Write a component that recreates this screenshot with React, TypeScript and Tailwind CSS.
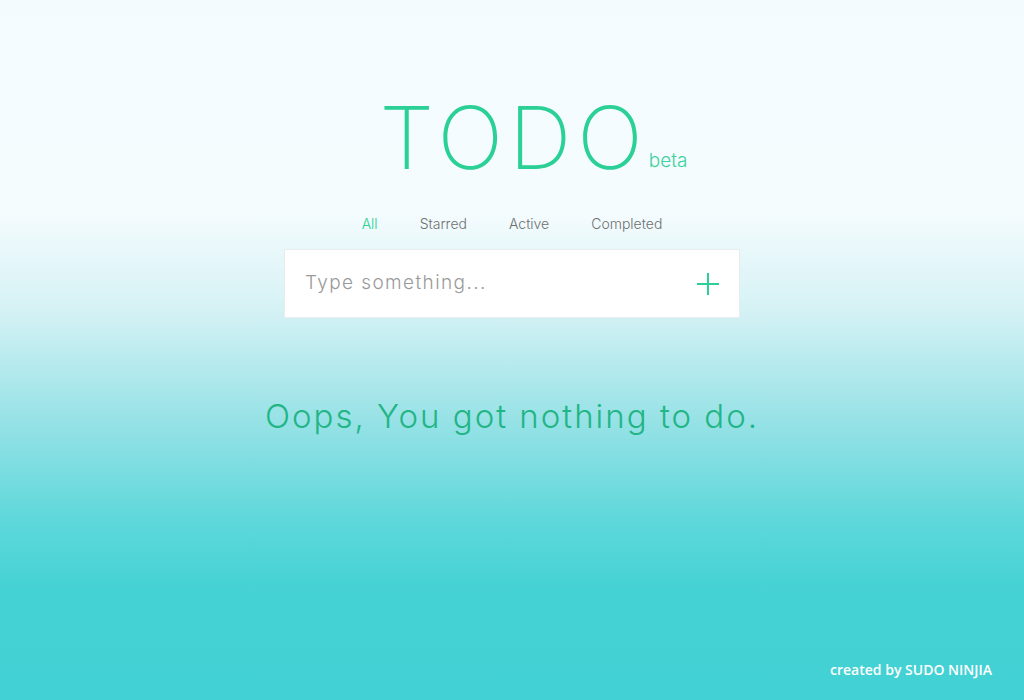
import React from "react";

export default function App() {
  const tabs = ["All", "Starred", "Active", "Completed"];
  return (
    <div className="relative w-full h-[700px] overflow-hidden flex flex-col items-center bg-[linear-gradient(180deg,#f4fbff_0%,#f5fcfe_30%,#d6f2f5_44%,#97e2e6_60%,#5fd8db_74%,#45d2d4_84%,#42d1d4_100%)] font-['Inter',sans-serif]">
      <div className="mt-[94px] ml-[43px] flex items-baseline">
        <h1 className="text-[87px] leading-none font-extralight tracking-[6px] text-[#2bd096]">TODO</h1>
        <span className="-translate-y-[2px] text-[19px] leading-none text-[#3dd19e] font-light">beta</span>
      </div>
      <nav className="mt-[36px] flex text-[14px] leading-none font-light">
        {tabs.map((t, i) => (
          <span key={t} className={`px-[21px] ${i === 0 ? "text-[#2bd096]" : "text-[#6f6f6f]"}`}>
            {t}
          </span>
        ))}
      </nav>
      <div className="mt-[18px] w-[456px] h-[69px] bg-white border border-[#e9ecec] flex items-center pl-[20px] pr-[19px]">
        <span className="flex-1 text-[19px] font-light tracking-[1.4px] text-[#9a9a9a]">Type something...</span>
        <svg width="24" height="24" viewBox="0 0 24 24">
          <path d="M12 1v22M1 12h22" stroke="#2bd096" strokeWidth="2" fill="none" />
        </svg>
      </div>
      <p className="mt-[82px] text-[33px] leading-none tracking-[2px] text-[#22b585] font-light">Oops, You got nothing to do.</p>
      <footer className="absolute right-[32px] bottom-[20px] text-[14px] font-semibold text-white font-['Open_Sans',sans-serif]">
        created by SUDO NINJIA
      </footer>
    </div>
  );
}
